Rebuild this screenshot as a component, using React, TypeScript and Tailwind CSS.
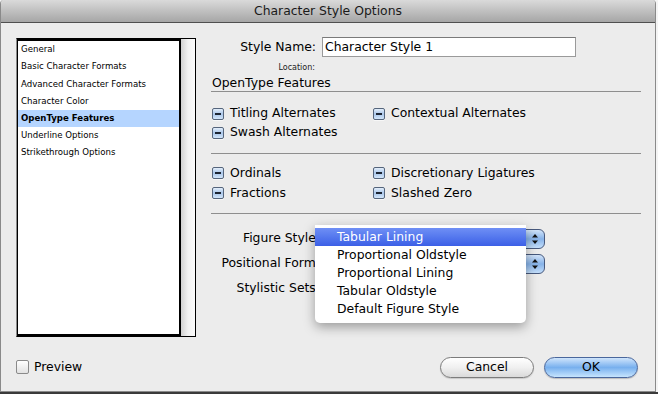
import React from "react";

const FONT = { fontFamily: '"DejaVu Sans", "Liberation Sans", sans-serif' };

function MinusBox() {
  return (
    <span className="w-[12px] h-[12px] shrink-0 rounded-[2px] border border-[#55657c] bg-gradient-to-b from-[#e3eefa] via-[#a9c6ea] to-[#d3e6fa] flex items-center justify-center shadow-[0_1px_0_rgba(255,255,255,0.6)]">
      <span className="w-[6px] h-[2px] bg-[#1c2533]" />
    </span>
  );
}

function Opt({ label }: { label: string }) {
  return (
    <div className="h-full flex items-center gap-[6px] pl-px">
      <MinusBox />
      <span className="text-[12.4px] text-black whitespace-nowrap">{label}</span>
    </div>
  );
}

function Arrows() {
  return (
    <svg width="8" height="12" viewBox="0 0 8 12">
      <path d="M4 1 L7 4.5 L1 4.5 Z" fill="#111" />
      <path d="M4 11 L7 7.5 L1 7.5 Z" fill="#111" />
    </svg>
  );
}

function Select({ visible = true }: { visible?: boolean }) {
  if (!visible) return <div className="w-[223px] h-[20px]" />;
  return (
    <div className="w-[223px] h-[20px] flex">
      <div className="flex-1 bg-white border border-[#8d8d8d] rounded-l-[4px]" />
      <div className="w-[20px] rounded-r-[6px] border border-[#47597d] bg-gradient-to-b from-[#d2e4f9] via-[#86b2e8] to-[#c4dffb] flex items-center justify-center">
        <Arrows />
      </div>
    </div>
  );
}

const listItems = [
  "General",
  "Basic Character Formats",
  "Advanced Character Formats",
  "Character Color",
  "OpenType Features",
  "Underline Options",
  "Strikethrough Options",
];

export default function App() {
  return (
    <div className="relative w-[658px] h-[394px] bg-[#f4f4f4] overflow-hidden" style={FONT}>
      <div className="w-[656px] h-[392px] flex flex-col bg-[#ececec] border-x border-b border-[#8a8a8a] rounded-t-[4px] overflow-hidden">
        {/* Title bar */}
        <div className="h-[23px] shrink-0 bg-gradient-to-b from-[#dadada] to-[#a6a6a6] border-b border-[#4f4f4f] flex items-center justify-center">
          <span className="text-[12.4px] text-[#1a1a1a] leading-none">Character Style Options</span>
        </div>

        {/* Body */}
        <div className="flex-1 flex flex-col">
          <div className="flex pt-[14px]">
            {/* Left list */}
            <div className="ml-[15px] mt-[1px] w-[180px] h-[299px] flex border border-black border-l-[#8a8a8a]">
              <div className="w-[164px] h-full bg-white border-2 border-black border-l-[1.5px] flex flex-col">
                {listItems.map((it) => {
                  const sel = it === "OpenType Features";
                  return (
                    <div
                      key={it}
                      className={
                        "h-[17.2px] shrink-0 flex items-center pl-[3px] text-[8.6px] text-black whitespace-nowrap " +
                        (sel ? "bg-[#b5d5ff] font-bold" : "")
                      }
                    >
                      {it}
                    </div>
                  );
                })}
              </div>
              <div className="flex-1 bg-gradient-to-r from-[#d2d2d2] via-[#f2f2f2] to-[#fbfbfb]" />
            </div>

            {/* Right panel */}
            <div className="ml-[15px] w-[430px] flex flex-col">
              <div className="h-[20px] flex items-center">
                <span className="w-[105px] text-right text-[12.4px] text-black">Style Name:</span>
                <div className="ml-[6px] w-[254px] h-[20px] bg-white border border-[#9a9a9a] border-t-[#7a7a7a] flex items-center pl-[2px] text-[12.4px] text-black">
                  Character Style 1
                </div>
              </div>
              <div className="mt-[6px] h-[10px] flex items-center">
                <span className="w-[104px] text-right text-[8px] text-[#222] leading-none">Location:</span>
              </div>
              <div className="mt-[3px] h-[16px] border-b border-[#8e8e8e] flex items-center">
                <span className="text-[12.4px] text-black leading-none pl-px">OpenType Features</span>
              </div>

              <div className="mt-[12px] grid grid-cols-[161px_1fr] grid-rows-[19px_19px]">
                <Opt label="Titling Alternates" />
                <Opt label="Contextual Alternates" />
                <Opt label="Swash Alternates" />
                <div />
              </div>

              <div className="mt-[11px] h-px bg-[#8e8e8e]" />

              <div className="mt-[9px] grid grid-cols-[161px_1fr] grid-rows-[20px_20px]">
                <Opt label="Ordinals" />
                <Opt label="Discretionary Ligatures" />
                <Opt label="Fractions" />
                <Opt label="Slashed Zero" />
              </div>

              <div className="mt-[10px] h-px bg-[#8e8e8e]" />

              <div className="mt-[12px] flex flex-col">
                {[
                  ["Figure Style:", true],
                  ["Positional Form:", true],
                  ["Stylistic Sets:", false],
                ].map(([l, v]) => (
                  <div key={l as string} className="h-[25px] flex items-center">
                    <span className="w-[109px] text-right text-[12.4px] text-black whitespace-nowrap">{l as string}</span>
                    <div className="ml-[2px]">
                      <Select visible={v as boolean} />
                    </div>
                  </div>
                ))}
              </div>
            </div>
          </div>

          {/* Bottom bar */}
          <div className="mt-[20px] h-[21px] flex items-center">
            <div className="ml-[15px] flex items-center gap-[5px]">
              <span className="w-[13px] h-[14px] rounded-[2px] border border-[#8a8a8a] bg-gradient-to-b from-white to-[#e2e2e2]" />
              <span className="text-[12.4px] text-black">Preview</span>
            </div>
            <div className="ml-auto mr-[17px] flex items-center gap-[10px]">
              <div className="w-[94px] h-[21px] rounded-full border border-[#7c7c7c] bg-gradient-to-b from-white via-[#f0f0f0] to-[#dadada] flex items-center justify-center text-[12.4px] text-black shadow-[0_1px_1px_rgba(0,0,0,0.15)]">
                Cancel
              </div>
              <div className="w-[94px] h-[21px] rounded-full border border-[#4a679c] bg-gradient-to-b from-[#cfe4fb] via-[#78b0ee] to-[#c6e4fd] flex items-center justify-center text-[12.4px] text-black shadow-[0_1px_1px_rgba(0,0,0,0.2)]">
                OK
              </div>
            </div>
          </div>
        </div>
      </div>
      <div className="absolute left-0 right-0 bottom-0 h-[2px] bg-[#3a3a3a]" />

      {/* Popup menu */}
      <div className="absolute left-[315px] top-[225px] w-[211px] h-[98px] bg-white rounded-b-[5px] shadow-[0_4px_12px_rgba(0,0,0,0.35)] pt-[3px]">
        {[
          "Tabular Lining",
          "Proportional Oldstyle",
          "Proportional Lining",
          "Tabular Oldstyle",
          "Default Figure Style",
        ].map((it, i) => (
          <div
            key={it}
            className={
              "h-[18px] flex items-center pl-[22px] text-[12.4px] whitespace-nowrap " +
              (i === 0 ? "bg-gradient-to-b from-[#6f8ff5] to-[#3c5fe6] text-white" : "text-black")
            }
          >
            {it}
          </div>
        ))}
      </div>
    </div>
  );
}
